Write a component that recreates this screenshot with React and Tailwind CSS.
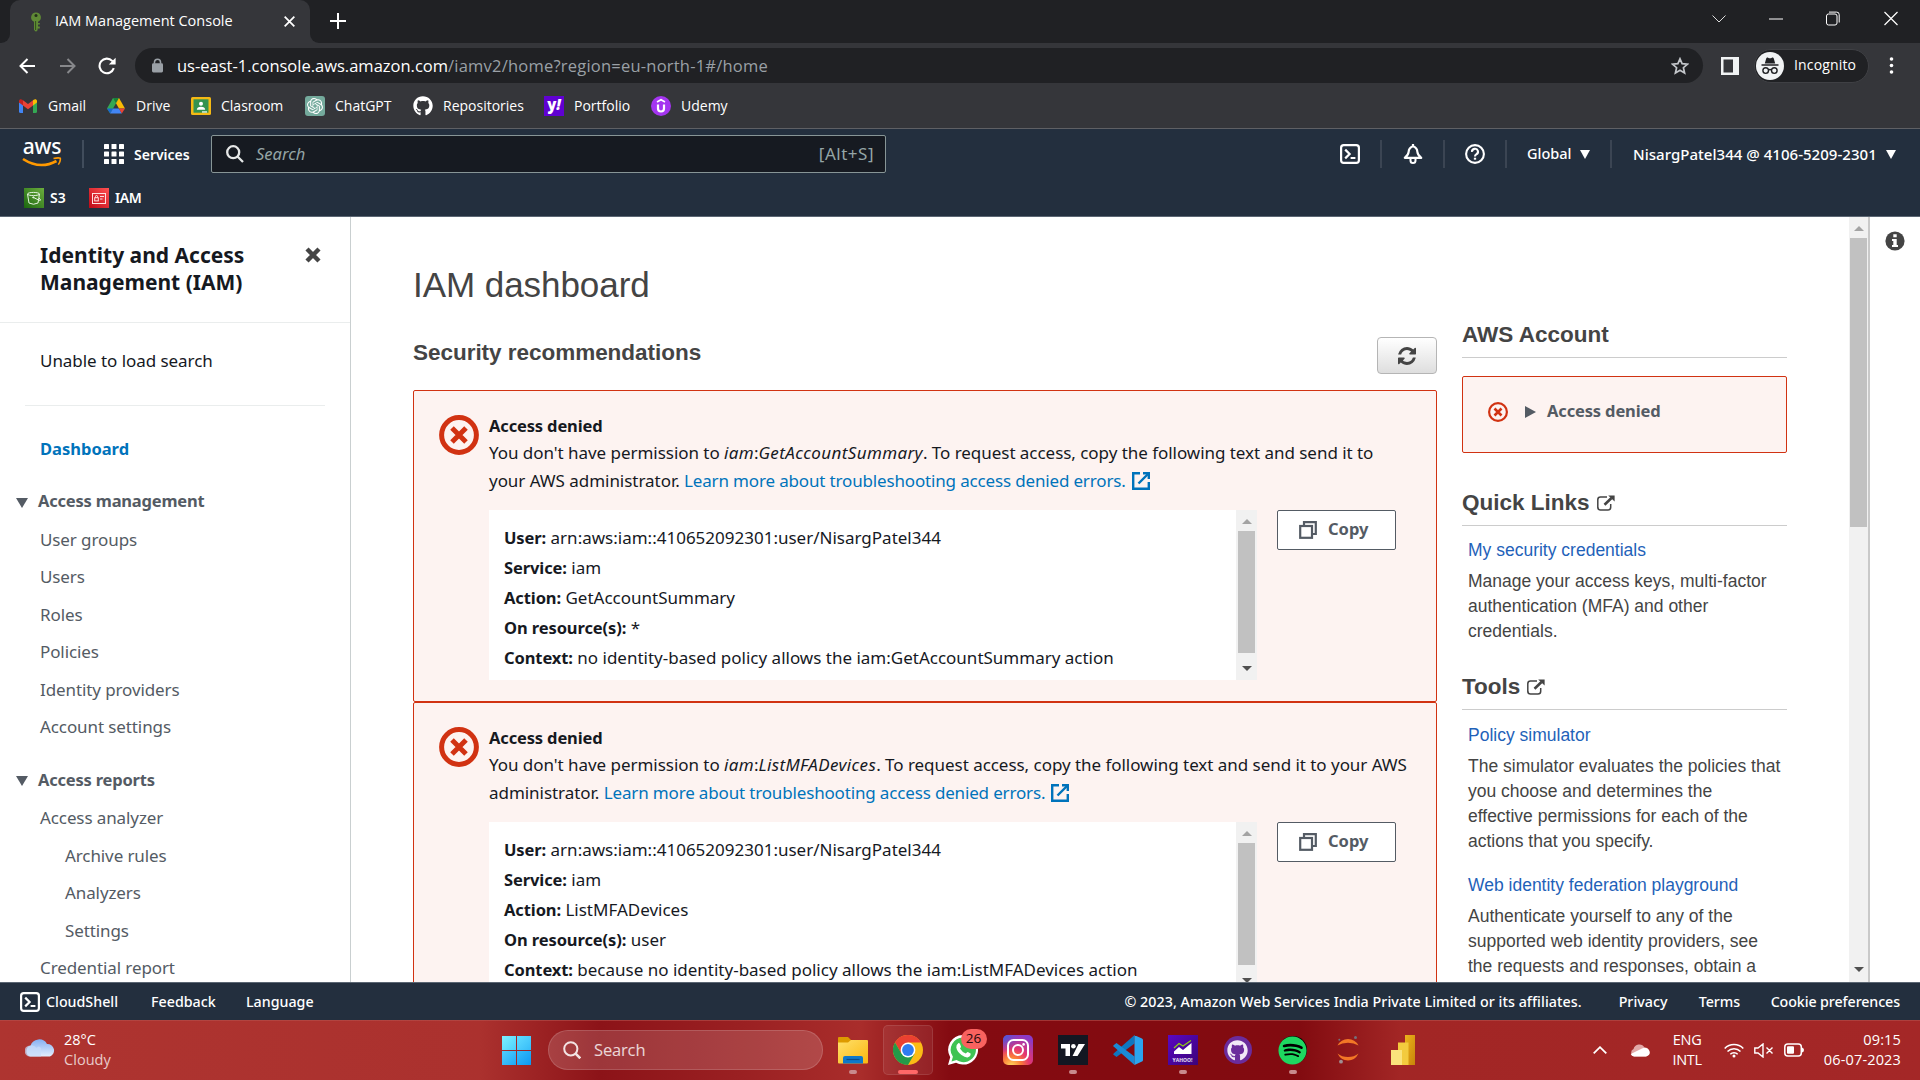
import React from "react";
import { FaGithub, FaSpotify } from "react-icons/fa";

const EMBER = "font-['Noto_Sans','Open_Sans',sans-serif]";
const SEGOE = "font-['Open_Sans','Noto_Sans',sans-serif]";
const ARIAL = "font-['Liberation_Sans',Arial,sans-serif]";

/* ---------- shared glyphs ---------- */

function Triangle({ dir = "down", className = "" }) {
  const d = { down: "M0 0H10L5 9Z", up: "M0 9H10L5 0Z", right: "M0 0L10 5L0 10Z" }[dir];
  return (
    <svg viewBox={dir === "right" ? "0 0 10 10" : "0 0 10 9"} preserveAspectRatio="none" className={className} fill="currentColor">
      <path d={d} />
    </svg>
  );
}

function CloudShellIcon({ className }) {
  return (
    <svg viewBox="0 0 20 20" className={className} fill="none" stroke="currentColor">
      <rect x="1.1" y="1.1" width="17.8" height="17.8" rx="2.6" strokeWidth="2.2" />
      <path d="M5.2 5.6L9.6 10L5.2 14.4" strokeWidth="2.2" />
      <path d="M10.6 14H15.4" strokeWidth="2" />
    </svg>
  );
}

function ErrorIcon({ className }) {
  return (
    <svg viewBox="0 0 40 40" className={className} fill="none" stroke="#d13212" strokeWidth="5">
      <circle cx="20" cy="20" r="17.4" />
      <path d="M13 13L27 27M27 13L13 27" />
    </svg>
  );
}

function ExternalBlue() {
  return (
    <svg viewBox="0 0 18 18" className="ml-1.5 inline-block h-[18px] w-[18px] align-[-3px]" fill="none" stroke="#0073bb" strokeWidth="2.4">
      <path d="M8 1.2H1.2V16.8H16.8V10" />
      <path d="M11 1.2H16.8V7" />
      <path d="M16.5 1.5L6.5 11.5" />
    </svg>
  );
}

function ExternalGray() {
  return (
    <svg viewBox="0 0 18 16" className="ml-[7px] h-4 w-[18px]" fill="none" stroke="#444">
      <path d="M10 2H3.500A2.700 2.700 0 0 0 .8 4.600V12.400A2.700 2.700 0 0 0 3.500 15H11A2.700 2.700 0 0 0 13.700 12.400V9" strokeWidth="1.500" />
      <path d="M7.500 9.800L14.500 3" strokeWidth="2.600" />
      <path d="M11.200 .4H17.600V6.600Z" fill="#444" stroke="none" />
    </svg>
  );
}

/* ---------- browser chrome ---------- */

function TabStrip() {
  return (
    <div className="flex h-[43px] bg-[#202124] text-white">
      <div className="h-full w-[10px] bg-[#35363a]">
        <div className="h-full w-full rounded-br-[9px] bg-[#202124]" />
      </div>
      <div className="flex h-full w-[300px] items-center rounded-t-[10px] bg-[#35363a]">
        <svg viewBox="0 0 12 20" className="ml-5 h-5 w-3">
          <path d="M6 .5a4.800 4.800 0 0 0-2 9.200V18l2 1.800 1.600-1.500V16.500H9.800V14.500H8V12.500H9.800V11H8V9.700A4.800 4.800 0 0 0 6 .5Z" fill="#5f8a35" />
          <circle cx="6" cy="3.600" r="1.500" fill="#24301a" />
          <path d="M5.600 9V18" stroke="#2f4d1c" strokeWidth="1" />
        </svg>
        <span className="ml-[13px] -mt-[2px] w-[210px] whitespace-nowrap text-[14.5px]">IAM Management Console</span>
        <svg viewBox="0 0 10 10" className="ml-[19px] h-[11px] w-[11px]" stroke="#fff" strokeWidth="1.600">
          <path d="M.6 .6L9.400 9.400M9.400 .6L.6 9.400" />
        </svg>
      </div>
      <div className="h-full w-[10px] bg-[#35363a]">
        <div className="h-full w-full rounded-bl-[9px] bg-[#202124]" />
      </div>
      <svg viewBox="0 0 16 16" className="ml-[10px] mt-[13px] h-4 w-4" stroke="#fff" strokeWidth="2">
        <path d="M8 0V16M0 8H16" />
      </svg>
      <div className="ml-auto flex pt-[11px]">
        <svg viewBox="0 0 14 14" className="h-[15px] w-[14px]" stroke="#ddd" fill="none"><path d="M.5 4L7 10.500L13.500 4" /></svg>
        <svg viewBox="0 0 14 14" className="ml-[43px] h-[15px] w-[14px]" stroke="#fff" fill="none"><path d="M0 7.500H14" /></svg>
        <svg viewBox="0 0 14 14" className="ml-[43px] h-[15px] w-[14px]" stroke="#fff" fill="none">
          <rect x=".5" y="2.500" width="10.500" height="11" rx="2" />
          <path d="M3 .6H10.500A2.500 2.500 0 0 1 13.200 3V11" />
        </svg>
        <svg viewBox="0 0 14 14" className="ml-[44px] mr-[22px] h-[15px] w-[14px]" stroke="#fff" fill="none"><path d="M.5 .5L13.500 13.500M13.500 .5L.5 13.500" strokeWidth="1.200" /></svg>
      </div>
    </div>
  );
}

function Toolbar() {
  return (
    <div className="flex h-[45px] items-center bg-[#35363a] text-white">
      <svg viewBox="0 0 16 16" className="ml-[19px] h-4 w-4" fill="none" stroke="#fff" strokeWidth="2"><path d="M16 8H1.500M8.500 1L1.500 8L8.500 15" /></svg>
      <svg viewBox="0 0 16 16" className="ml-[25px] h-4 w-4" fill="none" stroke="#87888b" strokeWidth="2"><path d="M0 8H14.500M7.500 1L14.500 8L7.500 15" /></svg>
      <svg viewBox="0 0 18 18" className="ml-[22px] h-[18px] w-[18px]" fill="none" stroke="#fff" strokeWidth="2.100">
        <path d="M15.800 11.200A7.300 7.300 0 1 1 14.200 3.900L16 5.800" />
        <path d="M17.600 .8V7.600H10.800Z" fill="#fff" stroke="none" />
      </svg>
      <div className="ml-[19px] flex h-[35px] w-[1568px] items-center rounded-full bg-[#202124]">
        <svg viewBox="0 0 12 15" className="ml-[17px] h-[15px] w-[11px]" fill="#9aa0a6">
          <rect x="0" y="5" width="12" height="10" rx="1.500" />
          <path d="M2.700 5.500V4A3.300 3.300 0 0 1 9.300 4V5.500" fill="none" stroke="#9aa0a6" strokeWidth="1.700" />
        </svg>
        <span className="ml-[14px] mt-px whitespace-nowrap text-[16.5px]">us-east-1.console.aws.amazon.com<span className="tracking-[0.22px] text-[#9aa0a6]">/iamv2/home?region=eu-north-1#/home</span></span>
        <svg viewBox="0 0 18 18" className="ml-auto mr-[14px] h-[18px] w-[18px]" fill="none" stroke="#c4c7cb" strokeWidth="1.700">
          <path d="M9 1.800L11.100 6.700L16.500 7.200L12.400 10.700L13.600 16L9 13.200L4.400 16L5.600 10.700L1.500 7.200L6.900 6.700Z" />
        </svg>
      </div>
      <svg viewBox="0 0 18 18" className="ml-[18px] h-[18px] w-[18px]"><path fillRule="evenodd" fill="#f1f3f4" d="M0 0H18V18H0ZM2.500 2.500V15.500H12V2.500Z" /></svg>
      <div className="ml-[15px] flex h-[34px] w-[115px] items-center rounded-full border border-[#3f4044] bg-[#202124]">
        <svg viewBox="0 0 28 28" className="ml-[1px] h-7 w-7">
          <circle cx="14" cy="14" r="14" fill="#f1f3f4" />
          <path d="M10.200 6.500C10.600 5.400 11.500 5.500 12.500 5.900C13.500 6.200 14.500 6.200 15.500 5.900C16.500 5.500 17.400 5.400 17.800 6.500L19.200 11.400H8.800Z" fill="#202124" />
          <path d="M5.500 13H22.500" stroke="#202124" strokeWidth="1.500" />
          <g fill="none" stroke="#202124" strokeWidth="1.400"><circle cx="9.700" cy="18.600" r="2.800" /><circle cx="18.300" cy="18.600" r="2.800" /><path d="M12.500 18Q14 17 15.500 18" /></g>
        </svg>
        <span className="ml-[10px] -mt-[2px] text-[14px] tracking-[0.15px]">Incognito</span>
      </div>
      <svg viewBox="0 0 4 17" className="ml-[20px] h-[17px] w-[5px]" fill="#fff"><circle cx="2" cy="2" r="1.800" /><circle cx="2" cy="8.500" r="1.800" /><circle cx="2" cy="15" r="1.800" /></svg>
    </div>
  );
}

function GmailIcon() {
  return (
    <svg viewBox="0 0 20 20" className="ml-px h-5 w-5">
      <path d="M1 6V15.500Q1 17 2.500 17H5V8.500Z" fill="#4285f4" />
      <path d="M19 6V15.500Q19 17 17.500 17H15V8.500Z" fill="#34a853" />
      <path d="M15 4.300L15 9.500L19 6.500V5C19 3.200 17 2.700 15.700 3.700Z" fill="#fbbc04" />
      <path d="M5 4.300V9.500L1 6.500V5C1 3.200 3 2.700 4.300 3.700Z" fill="#c5221f" />
      <path d="M5 4.200L10 8L15 4.200V9.500L10 13.300L5 9.500Z" fill="#ea4335" />
    </svg>
  );
}

function DriveIcon() {
  return (
    <svg viewBox="0 0 20 20" className="h-5 w-5">
      <path d="M7 2H13L10 7.200L4.200 17.500L1 12.500Z" fill="#34a853" />
      <path d="M7 2H13L10 7.200Z" fill="#188038" />
      <path d="M13 2L19 12.500H13L10 7.200Z" fill="#fbbc04" />
      <path d="M1 12.500H7L4.200 17.500Z" fill="#1967d2" />
      <path d="M7 12.500H13L15.800 17.500H4.200Z" fill="#4285f4" />
      <path d="M13 12.500H19L15.800 17.500Z" fill="#ea4335" />
    </svg>
  );
}

function ClassroomIcon() {
  return (
    <svg viewBox="0 0 20 20" className="h-5 w-5">
      <rect width="20" height="18" y="1" rx="1.500" fill="#f5ba14" />
      <rect x="2.500" y="3.300" width="15" height="13.400" fill="#34934f" />
      <circle cx="10" cy="7.800" r="2" fill="#fff" />
      <path d="M5.800 13.800Q6 10.800 10 10.800T14.200 13.800Z" fill="#fff" />
      <rect x="11" y="15.200" width="5" height="1.500" fill="#d7efe0" />
    </svg>
  );
}

function OpenAIIcon() {
  return (
    <div className="flex h-5 w-5 items-center justify-center rounded-[3px] bg-[#74aa9c]">
      <svg viewBox="0 0 24 24" className="h-4 w-4" fill="#fff">
        <path d="M22.2819 9.8211a5.9847 5.9847 0 0 0-.5157-4.9108 6.0462 6.0462 0 0 0-6.5098-2.9A6.0651 6.0651 0 0 0 4.9807 4.1818a5.9847 5.9847 0 0 0-3.9977 2.9 6.0462 6.0462 0 0 0 .7427 7.0966 5.98 5.98 0 0 0 .511 4.9107 6.051 6.051 0 0 0 6.5146 2.9001A5.9847 5.9847 0 0 0 13.2599 24a6.0557 6.0557 0 0 0 5.7718-4.2058 5.9894 5.9894 0 0 0 3.9977-2.9001 6.0557 6.0557 0 0 0-.7475-7.0729zm-9.022 12.6081a4.4755 4.4755 0 0 1-2.8764-1.0408l.1419-.0804 4.7783-2.7582a.7948.7948 0 0 0 .3927-.6813v-6.7369l2.02 1.1686a.071.071 0 0 1 .038.052v5.5826a4.504 4.504 0 0 1-4.4945 4.4944zm-9.6607-4.1254a4.4708 4.4708 0 0 1-.5346-3.0137l.142.0852 4.783 2.7582a.7712.7712 0 0 0 .7806 0l5.8428-3.3685v2.3324a.0804.0804 0 0 1-.0332.0615L9.74 19.9502a4.4992 4.4992 0 0 1-6.1408-1.6464zM2.3408 7.8956a4.485 4.485 0 0 1 2.3655-1.9728V11.6a.7664.7664 0 0 0 .3879.6765l5.8144 3.3543-2.0201 1.1685a.0757.0757 0 0 1-.071 0l-4.8303-2.7865A4.504 4.504 0 0 1 2.3408 7.872zm16.5963 3.8558L13.1038 8.364 15.1192 7.2a.0757.0757 0 0 1 .071 0l4.8303 2.7913a4.4944 4.4944 0 0 1-.6765 8.1042v-5.6772a.79.79 0 0 0-.407-.667zm2.0107-3.0231l-.142-.0852-4.7735-2.7818a.7759.7759 0 0 0-.7854 0L9.409 9.2297V6.8974a.0662.0662 0 0 1 .0284-.0615l4.8303-2.7866a4.4992 4.4992 0 0 1 6.6802 4.66zM8.3065 12.863l-2.02-1.1638a.0804.0804 0 0 1-.038-.0567V6.0742a4.4992 4.4992 0 0 1 7.3757-3.4537l-.142.0805L8.704 5.459a.7948.7948 0 0 0-.3927.6813zm1.0976-2.3654l2.602-1.4998 2.6069 1.4998v2.9994l-2.5974 1.4997-2.6067-1.4997Z" />
      </svg>
    </div>
  );
}

function YahooIcon() {
  return (
    <div className="flex h-5 w-5 items-center justify-center bg-[#6001d2] text-[15px] font-extrabold leading-none text-white">
      <span className="-mt-1">y</span>
      <span className="-mt-1 italic">!</span>
    </div>
  );
}

function UdemyIcon() {
  return (
    <svg viewBox="0 0 20 20" className="h-5 w-5">
      <circle cx="10" cy="10" r="10" fill="#a435f0" />
      <path d="M6 6L10 3.700L14 6" fill="none" stroke="#fff" strokeWidth="1.600" />
      <path d="M7 8.500V12.500A3 3 0 0 0 13 12.500V8.500" fill="none" stroke="#fff" strokeWidth="2.200" />
    </svg>
  );
}

const bookmarks = [
  { label: "Gmail", width: "w-[89px]", icon: <GmailIcon /> },
  { label: "Drive", width: "w-[85px]", icon: <DriveIcon /> },
  { label: "Clasroom", width: "w-[114px]", icon: <ClassroomIcon /> },
  { label: "ChatGPT", width: "w-[108px]", icon: <OpenAIIcon /> },
  { label: "Repositories", width: "w-[131px]", icon: <FaGithub className="h-5 w-5" /> },
  { label: "Portfolio", width: "w-[107px]", icon: <YahooIcon /> },
  { label: "Udemy", width: "w-[100px]", icon: <UdemyIcon /> },
];

function Bookmarks() {
  return (
    <div className="flex h-[41px] border-b border-[#5f6064] bg-[#35363a] pb-1 pl-[17px] text-white">
      {bookmarks.map((b) => (
        <div key={b.label} className={"flex items-center gap-[10px] whitespace-nowrap text-[14px] " + b.width}>
          {b.icon}
          <span className="-mt-[2px]">{b.label}</span>
        </div>
      ))}
    </div>
  );
}

/* ---------- AWS header ---------- */

function AwsHeader() {
  return (
    <header className="h-[88px] border-b border-[#5b6673] bg-[#232f3e] text-white">
      <div className="flex h-[50px] items-center">
        <div className="ml-[21px] flex w-[42px] flex-col items-center">
          <span className="-mt-1 text-[21px] font-medium leading-[17px] tracking-[-0.3px]">aws</span>
          <svg viewBox="0 0 40 10" className="mt-0.5 h-[10px] w-10" fill="none" stroke="#ff9900">
            <path d="M1 2Q18 13 34.500 4" strokeWidth="2.600" />
            <path d="M31.500 1.600Q36.500 .3 38.300 1.300Q38.800 4 36.300 7.600" strokeWidth="1.600" />
          </svg>
        </div>
        <div className="ml-[19px] h-7 w-[2px] bg-[#414d5c]" />
        <svg viewBox="0 0 20 20" className="ml-[20px] h-5 w-5" fill="#fff">
          {[0, 7.5, 15].map((x) => [0, 7.5, 15].map((y) => <rect key={x + "-" + y} x={x} y={y} width="5" height="5" rx=".6" />))}
        </svg>
        <span className="ml-[10px] w-[77px] text-[14px] font-semibold">Services</span>
        <div className="flex h-[38px] w-[675px] items-center rounded-[2px] border border-[#879596] bg-[#161a21] text-[16.5px] text-[#95a5a6]">
          <svg viewBox="0 0 18 18" className="ml-[14px] h-[18px] w-[18px]" fill="none" stroke="#e6e8e8" strokeWidth="2.300"><circle cx="7.200" cy="7.200" r="6" /><path d="M11.500 11.500L17 17" /></svg>
          <span className="ml-[12px] italic">Search</span>
          <span className="ml-auto mr-[11px] text-[17px] tracking-[0.5px]">[Alt+S]</span>
        </div>
        <div className="ml-auto flex h-7 items-center text-[14.5px] font-medium">
          <div className="flex w-[60px] justify-center"><CloudShellIcon className="h-5 w-5" /></div>
          <div className="flex h-7 w-[65px] items-center justify-center border-x-2 border-[#3b4553]">
            <svg viewBox="0 0 20 20" className="h-5 w-5" fill="none" stroke="#fff" strokeWidth="2.200">
              <path d="M10 2.200C7.200 3 5.800 5 5.600 8C5.500 10.500 4 12 1.800 13.900H18.200C16 12 14.500 10.500 14.400 8C14.200 5 12.800 3 10 2.200Z" strokeLinejoin="round" />
              <path d="M10 0V3" />
              <path d="M7.500 15V16.500A2.500 2.500 0 0 0 12.500 16.500V15" strokeWidth="2" />
            </svg>
          </div>
          <div className="flex w-[60px] justify-center">
            <svg viewBox="0 0 20 20" className="h-5 w-5" fill="none" stroke="#fff" strokeWidth="2.100">
              <circle cx="10" cy="10" r="8.900" />
              <path d="M7 7.900A3 2.900 0 1 1 11.300 10.300Q10 11 10 12.400" />
              <path d="M10 13.700V15.700" strokeWidth="2.300" />
            </svg>
          </div>
          <div className="flex h-7 w-[107px] items-center border-x-2 border-[#3b4553] pl-[20px]">
            <span>Global</span>
            <Triangle className="ml-2 h-[9px] w-[10px]" />
          </div>
          <div className="flex w-[308px] items-center pl-[21px]">
            <span className="w-[253px] whitespace-nowrap text-[15px] tracking-[0.03px]">NisargPatel344 @ 4106-5209-2301</span>
            <Triangle className="h-[9px] w-[10px]" />
          </div>
        </div>
      </div>
      <div className="flex h-[37px] items-center pl-6 text-[14px] font-semibold">
        <svg viewBox="0 0 20 20" className="h-5 w-5">
          <defs><linearGradient id="s3" x1="0" y1="1" x2="1" y2="0"><stop offset="0" stopColor="#1b660f" /><stop offset="1" stopColor="#6cae3e" /></linearGradient></defs>
          <rect width="20" height="20" fill="url(#s3)" />
          <g fill="none" stroke="#e4f2df" strokeWidth="1"><ellipse cx="9.500" cy="6" rx="6" ry="1.600" /><path d="M3.500 6L5 15Q9.500 17.500 14 15L15.500 6" /><path d="M9.500 9.500L15 12.200Q17 12.800 16.400 11.500L15 10" /><circle cx="9.300" cy="9.400" r=".6" fill="#fff" /></g>
        </svg>
        <span className="ml-[6px] w-[39px]">S3</span>
        <svg viewBox="0 0 20 20" className="h-5 w-5">
          <defs><linearGradient id="iam" x1="0" y1="1" x2="1" y2="0"><stop offset="0" stopColor="#bd0816" /><stop offset="1" stopColor="#ff5252" /></linearGradient></defs>
          <rect width="20" height="20" fill="url(#iam)" />
          <g fill="none" stroke="#ffe1e1" strokeWidth="1"><rect x="3.500" y="5.500" width="13" height="10" /><rect x="5.700" y="9.700" width="3.600" height="3.200" /><path d="M6.500 9.500V8.500A1 1 0 0 1 8.500 8.500V9.500M11 8.500H15M11 11H13.500" /></g>
        </svg>
        <span className="ml-[6px] tracking-[-0.4px]">IAM</span>
      </div>
    </header>
  );
}

/* ---------- side navigation ---------- */

function NavItem({ children, indent }) {
  return <a className={"flex h-[37.5px] items-center whitespace-nowrap tracking-[-0.1px] " + (indent ? "pl-[65px]" : "pl-[40px]")}>{children}</a>;
}

function NavGroup({ children }) {
  return (
    <div className="flex h-[37.5px] items-center pl-4 text-[16.5px] font-bold tracking-[-0.2px]">
      <Triangle className="mr-[10px] mt-0.5 h-[10px] w-[12px]" />
      {children}
    </div>
  );
}

function SideNav() {
  return (
    <nav className="h-full w-[351px] shrink-0 overflow-hidden border-r border-[#c9cfd0] bg-white text-[17px] text-[#545b64]">
      <div className="flex h-[106px] justify-between border-b border-[#eaeded] pl-10 pr-[29px] pt-[25px] text-[21px] font-bold leading-[27px] text-[#16191f]">
        <span>Identity and Access<br />Management (IAM)</span>
        <svg viewBox="0 0 16 16" className="mt-[5px] h-4 w-4" stroke="#444" strokeWidth="4.400"><path d="M2 2L14 14M14 2L2 14" /></svg>
      </div>
      <div className="mx-[25px] flex h-[83px] items-center border-b border-[#eaeded] pb-[6px] pl-[15px] text-[#16191f]"><span className="tracking-[-0.05px]">Unable to load search</span></div>
      <div className="mt-[25px] flex h-[37.500px] items-center pl-[40px] text-[16.5px] font-bold text-[#0073bb]">Dashboard</div>
      <div className="h-[14.500px]" />
      <NavGroup>Access management</NavGroup>
      {["User groups", "Users", "Roles", "Policies", "Identity providers", "Account settings"].map((t) => <NavItem key={t}>{t}</NavItem>)}
      <div className="h-[16px]" />
      <NavGroup>Access reports</NavGroup>
      <NavItem>Access analyzer</NavItem>
      {["Archive rules", "Analyzers", "Settings"].map((t) => <NavItem key={t} indent>{t}</NavItem>)}
      <NavItem>Credential report</NavItem>
    </nav>
  );
}

/* ---------- main content ---------- */

function PermissionAlert({ name, tail, lead, rows }) {
  return (
    <section className={"flex h-[312px] shrink-0 rounded-[2px] border border-[#d13212] bg-[#fdf3f1] pl-[25px] text-[17px] text-[#16191f] " + EMBER}>
      <ErrorIcon className="mt-[24px] h-10 w-10 shrink-0" />
      <div className="ml-[10px] pt-[22px]">
        <h3 className="h-[26px] text-[16.5px] font-bold leading-[26px] tracking-[-0.15px]">Access denied</h3>
        <p className="h-[55px] whitespace-nowrap leading-[27.5px] tracking-[-0.04px]">
          You don't have permission to <i className="tracking-[0.3px]">iam</i>:<i className="tracking-[0.38px]">{name}</i>. To request access, copy the following text and send it to {tail}
          <br />
          {lead} <a className="tracking-[-0.16px] text-[#0073bb]">Learn more about troubleshooting access denied errors.<ExternalBlue /></a>
        </p>
        <div className="mt-[16px] flex">
          <div className="flex h-[170px] w-[768px] bg-white">
            <div className="flex-1 overflow-hidden whitespace-nowrap pl-[15px] pt-[13px] leading-[30px]">
              {rows.map(([k, v]) => (
                <div key={k}><b className="text-[16.5px] tracking-[-0.1px]">{k}:</b> {v}</div>
              ))}
            </div>
            <div className="flex w-[21px] flex-col items-center bg-[#f1f1f1]">
              <Triangle dir="up" className="mt-[9px] h-[5px] w-[10px] text-[#a3a3a3]" />
              <div className="mt-[7px] h-[122px] w-[17px] bg-[#c1c1c1]" />
              <Triangle className="mt-[13px] h-[5px] w-[10px] text-[#505050]" />
            </div>
          </div>
          <button className="ml-5 flex h-10 w-[119px] items-center rounded-[2px] border border-[#545b64] bg-white pl-[21px] text-[16.5px] font-bold text-[#545b64]">
            <svg viewBox="0 0 18 18" className="h-[18px] w-[18px]" fill="none" stroke="#545b64" strokeWidth="2.200"><rect x="1.200" y="5" width="11.800" height="11.800" /><path d="M5 5V1.200H16.800V13H13" /></svg>
            <span className="ml-[11px] -mt-0.5">Copy</span>
          </button>
        </div>
      </div>
    </section>
  );
}

function AsideHeading({ children, icon }) {
  return (
    <h2 className="flex h-[38px] items-start whitespace-nowrap border-b border-[#ccc] pt-px text-[22.5px] font-bold leading-7">
      {children}
      {icon && <span className="flex h-7 items-center"><ExternalGray /></span>}
    </h2>
  );
}

function Aside() {
  return (
    <aside className={"ml-[25px] w-[325px] shrink-0 pt-[103px] text-[17.5px] leading-[25px] text-[#444] " + ARIAL}>
      <AsideHeading>AWS Account</AsideHeading>
      <div className={"mt-[18px] flex h-[77px] rounded-[2px] border border-[#d13212] bg-[#fdf3f1] pl-[25px] pt-[21px] text-[16.5px] font-bold tracking-[-0.15px] text-[#545b64] " + EMBER}>
        <svg viewBox="0 0 20 20" className="mt-[4px] h-5 w-5" fill="none" stroke="#d13212" strokeWidth="2.200"><circle cx="10" cy="10" r="8.900" /><path d="M6.500 6.500L13.500 13.500M13.500 6.500L6.500 13.500" strokeWidth="2.600" /></svg>
        <Triangle dir="right" className="ml-[17px] mt-[8px] h-3 w-[11px]" />
        <span className="ml-[11px]">Access denied</span>
      </div>
      <div className="h-[35px]" />
      <AsideHeading icon>Quick Links</AsideHeading>
      <div className="whitespace-nowrap pl-[6px]">
        <a className="mt-3 block text-[#1f62b9]">My security credentials</a>
        <p className="mt-1.5">Manage your access keys, multi-factor<br />authentication (MFA) and other<br />credentials.</p>
      </div>
      <div className="h-[28px]" />
      <AsideHeading icon>Tools</AsideHeading>
      <div className="whitespace-nowrap pl-[6px]">
        <a className="mt-[13px] block text-[#1f62b9]">Policy simulator</a>
        <p className="mt-1.5">The simulator evaluates the policies that<br />you choose and determines the<br />effective permissions for each of the<br />actions that you specify.</p>
        <a className="mt-[19px] block text-[#1f62b9]">Web identity federation playground</a>
        <p className="mt-1.5">Authenticate yourself to any of the<br />supported web identity providers, see<br />the requests and responses, obtain a</p>
      </div>
    </aside>
  );
}

function Dashboard() {
  return (
    <main className="flex flex-1 overflow-hidden bg-white">
      <div className="ml-[62px] w-[1024px] shrink-0">
        <div className={"flex h-[173px] items-start justify-between text-[#444] " + ARIAL}>
          <div>
            <h1 className="mt-12 text-[35px] leading-10 tracking-[-0.05px]">IAM dashboard</h1>
            <h2 className="mt-[34px] text-[22.5px] font-bold leading-7 tracking-[-0.03px]">Security recommendations</h2>
          </div>
          <button className="mt-[120px] flex h-[37px] w-[60px] items-center justify-center rounded-[4px] border border-[#b5b5b5] bg-linear-to-b from-white to-[#dedede]">
            <svg viewBox="0 0 1536 1536" className="h-[18px] w-[18px]" fill="#444">
              <path d="M1511 928q0 5-1 7-64 268-268 434.500T764 1536q-146 0-282.500-55T238 1324l-129 129q-19 19-45 19t-45-19-19-45V960q0-26 19-45t45-19h448q26 0 45 19t19 45-19 45l-137 137q71 66 161 102t187 36q134 0 250-65t186-179q11-17 53-117 8-23 30-23h192q13 0 22.500 9.500t9.500 22.500zm25-800v448q0 26-19 45t-45 19h-448q-26 0-45-19t-19-45 19-45l138-138Q969 256 768 256q-134 0-250 65T332 500q-11 17-53 117-8 23-30 23H50q-13 0-22.500-9.500T18 608v-7q65-268 270-434.500T768 0q146 0 284 55.500T1297 212l130-129q19-19 45-19t45 19 19 45z" />
            </svg>
          </button>
        </div>
        <PermissionAlert
          name="GetAccountSummary"
          tail=""
          lead="your AWS administrator."
          rows={[["User", "arn:aws:iam::410652092301:user/NisargPatel344"], ["Service", "iam"], ["Action", "GetAccountSummary"], ["On resource(s)", "*"], ["Context", "no identity-based policy allows the iam:GetAccountSummary action"]]}
        />
        <PermissionAlert
          name="ListMFADevices"
          tail="your AWS"
          lead="administrator."
          rows={[["User", "arn:aws:iam::410652092301:user/NisargPatel344"], ["Service", "iam"], ["Action", "ListMFADevices"], ["On resource(s)", "user"], ["Context", "because no identity-based policy allows the iam:ListMFADevices action"]]}
        />
      </div>
      <Aside />
      <div className="ml-auto flex h-full w-[21px] flex-col items-center border-r-2 border-[#c9c9c9] bg-[#f1f1f1]">
        <Triangle dir="up" className="mt-[9px] h-[5px] w-[10px] text-[#a3a3a3]" />
        <div className="mt-[7px] h-[289px] w-[17px] bg-[#c1c1c1]" />
        <Triangle className="mb-[10px] mt-auto h-[5px] w-[10px] text-[#505050]" />
      </div>
      <div className="flex w-[50px] justify-center bg-white pt-[14px]">
        <svg viewBox="0 0 20 20" className="h-5 w-5">
          <circle cx="10" cy="10" r="9.600" fill="#444" />
          <path d="M8.300 3.200H11.700V6.200H8.300ZM7 8H11.700V14H13V16H7V14H8.300V10H7Z" fill="#fff" />
        </svg>
      </div>
    </main>
  );
}

function Footer() {
  return (
    <footer className="flex h-[38px] items-center border-t border-[#5b6673] bg-[#232f3e] pt-px text-[14.25px] font-medium text-white">
      <CloudShellIcon className="ml-5 h-5 w-5" />
      <span className="ml-[6px] w-[105px]">CloudShell</span>
      <span className="w-[95px]">Feedback</span>
      <span>Language</span>
      <span className="ml-auto mr-[37px] tracking-[0.05px]">© 2023, Amazon Web Services India Private Limited or its affiliates.</span>
      <span className="w-[80px]">Privacy</span>
      <span className="w-[72px]">Terms</span>
      <span className="mr-5 tracking-[-0.1px]">Cookie preferences</span>
    </footer>
  );
}

/* ---------- Windows taskbar ---------- */

function AppSlot({ children, running, active }) {
  return (
    <div className="flex h-full w-[55px] flex-col items-center">
      <div className={"mt-[4px] flex h-[50px] w-[50px] flex-col items-center rounded-[5px] border " + (active ? "border-white/10 bg-white/[0.07]" : "border-transparent")}>
        <div className="mt-[9px] h-[30px] w-[30px]">{children}</div>
        {active && <div className="mt-[5px] h-1 w-5 rounded-full bg-[#ff6767]" />}
        {running && <div className="mt-[5px] h-1 w-2 rounded-full bg-[#c98a8d]" />}
      </div>
    </div>
  );
}

function FolderIcon() {
  return (
    <svg viewBox="0 0 30 30" className="h-[30px] w-[30px]">
      <defs><linearGradient id="fold" x1="0" y1="0" x2="1" y2="1"><stop offset="0" stopColor="#ffe06b" /><stop offset="1" stopColor="#fbb80f" /></linearGradient></defs>
      <path d="M0 3Q0 2 1 2H10L13 5V10H0Z" fill="#dd9a00" />
      <path d="M0 7.500H10L13 5H29Q30 5 30 6V27.500Q30 28.500 29 28.500H1Q0 28.500 0 27.500Z" fill="url(#fold)" />
      <path d="M5 28.500V23Q5 21 7 21H23Q25 21 25 23V28.500Z" fill="#0f78c9" />
      <path d="M8.500 24.500H21.500" stroke="#0a4c8c" strokeWidth="1.200" />
    </svg>
  );
}

function ChromeIcon() {
  return (
    <svg viewBox="0 0 30 30" className="h-[30px] w-[30px]">
      <circle cx="15" cy="15" r="15" fill="#fbbc16" />
      <path d="M2 7.500A15 15 0 0 1 28 7.500H15L8.500 18.700Z" fill="#ea4031" />
      <path d="M2 7.500A15 15 0 0 0 15 30L21.500 18.700L15 15L8.500 18.700Z" fill="#249a49" />
      <circle cx="15" cy="15" r="7.400" fill="#fff" />
      <circle cx="15" cy="15" r="5.900" fill="#2f7cf0" />
    </svg>
  );
}

function WhatsAppIcon() {
  return (
    <div className="relative h-[30px] w-[30px]">
      <svg viewBox="0 0 30 30" className="h-[30px] w-[30px]">
        <path d="M15.200 0A14.800 14.800 0 1 1 8 27.700L0 30L2.200 22.200A14.800 14.800 0 0 1 15.200 0Z" fill="#fff" />
        <path d="M15.200 2.400A12.400 12.400 0 1 1 8.500 25L3.500 26.500L4.900 21.800A12.400 12.400 0 0 1 15.200 2.400Z" fill="#3fc353" />
        <path d="M10.500 8Q11.500 7.800 12 9L13 11.500Q13.200 12.200 12 13.500Q14 17 17.800 18.500Q19.200 16.800 19.800 17L22.600 18.500Q23 21.500 19.500 22.400Q17 22.600 13.500 20Q9 16.500 8.300 12.500Q8 9.500 10.500 8Z" fill="#fff" />
      </svg>
      <span className="absolute -top-[6px] left-[13px] flex h-5 w-[26px] items-center justify-center rounded-full bg-[#f9625f] text-[13.5px] leading-none text-[#26070a]">26</span>
    </div>
  );
}

function InstagramIcon() {
  return (
    <svg viewBox="0 0 30 30" className="h-[30px] w-[30px]">
      <defs>
        <radialGradient id="ig" cx=".28" cy="1.050" r="1.100"><stop offset="0" stopColor="#ffe060" /><stop offset=".3" stopColor="#fb7c38" /><stop offset=".55" stopColor="#e6366e" /><stop offset="1" stopColor="#8a3ac8" /></radialGradient>
        <radialGradient id="ig2" cx="0" cy="0" r=".6"><stop offset="0" stopColor="#3e5fe0" /><stop offset="1" stopColor="#6a48d0" stopOpacity="0" /></radialGradient>
      </defs>
      <rect width="30" height="30" rx="5" fill="url(#ig)" />
      <rect width="30" height="30" rx="5" fill="url(#ig2)" />
      <g fill="none" stroke="#fff" strokeWidth="2"><rect x="5" y="5" width="20" height="20" rx="5.500" /><circle cx="15" cy="15" r="5" /></g>
      <circle cx="20.600" cy="9.400" r="1.300" fill="#fff" />
    </svg>
  );
}

function TradingViewIcon() {
  return (
    <svg viewBox="0 0 30 30" className="h-[30px] w-[30px]">
      <rect width="30" height="30" fill="#131722" />
      <path d="M3 9H12V21H7.500V13.500H3ZM19.500 21H14.500L20.500 9H27Z" fill="#fff" />
      <circle cx="15.400" cy="11.300" r="2.300" fill="#fff" />
    </svg>
  );
}

function VSCodeIcon() {
  return (
    <svg viewBox="0 0 30 30" className="h-[30px] w-[30px]">
      <path d="M21.500 8.500L3.500 22L.5 19.700Q0 19 .6 18.400L21.500 0Z" fill="#0f76bf" />
      <path d="M21.500 21.500L3.500 8L.5 10.300Q0 11 .6 11.600L21.500 30Z" fill="#1a8ad6" />
      <path d="M21 0L29 3.500Q30 4 30 5V25Q30 26 29 26.500L21.500 30V0Z" fill="#2ba5ef" />
    </svg>
  );
}

function YahooFinanceIcon() {
  return (
    <div className="flex h-[30px] w-[30px] flex-col items-center bg-linear-to-br from-[#5a08c4] to-[#3b0379] pt-[5px]">
      <svg viewBox="0 0 20 14" className="h-[14px] w-5">
        <path d="M1 14V11.500L6 7L10 10L18.500 3V14Z" fill="#fff" />
        <path d="M1 8L6 3.500L10 6L18 .5" fill="none" stroke="#8fd014" strokeWidth="1.200" />
      </svg>
      <span className="mt-[3px] text-[5px] font-bold leading-[6px] text-white/90">YAHOO!</span>
    </div>
  );
}

function JupyterIcon() {
  return (
    <svg viewBox="0 0 30 30" className="h-[30px] w-[30px]">
      <path d="M4.500 10.500Q8 4 15 4T25.500 10.500Q21 7.800 15 7.800T4.500 10.500Z" fill="#f37726" />
      <path d="M4.500 18.500Q9 22 15 22T25.500 18.500Q22 25.500 15 25.500T4.500 18.500Z" fill="#f37726" />
      <circle cx="22.500" cy="2.600" r="1.500" fill="#75707a" /><circle cx="6.300" cy="4.800" r="1" fill="#75707a" /><circle cx="8" cy="26.700" r="1.900" fill="#a08f93" />
    </svg>
  );
}

function PowerBIIcon() {
  return (
    <svg viewBox="0 0 30 30" className="h-[30px] w-[30px]">
      <defs><linearGradient id="pb" x1="0" y1="0" x2="1" y2="1"><stop offset="0" stopColor="#ecb31c" /><stop offset="1" stopColor="#c88509" /></linearGradient></defs>
      <path d="M17 0H27V30H17Z" fill="url(#pb)" />
      <path d="M10 7.500H20.500V30H10Z" fill="#f3cb3e" />
      <path d="M3 15H14V30H3Z" fill="#fbe37c" />
    </svg>
  );
}

function Taskbar() {
  return (
    <div className={"flex h-[60px] border-t border-[#b5504c]/60 bg-[linear-gradient(90deg,#ae3430_0,#ab312e_480px,#8c1318_600px,#9a2022_740px,#a92d2b_860px,#840b11_950px,#820b10_1300px,#a22625_1400px,#a42727_1920px)] text-white " + SEGOE}>
      <div className="flex w-[502px] items-start pl-[25px]">
        <svg viewBox="0 0 30 20" className="mt-[16px] h-5 w-[30px]">
          <defs><linearGradient id="cl" x1="0" y1="0" x2="0" y2="1"><stop offset="0" stopColor="#86b0f2" /><stop offset="1" stopColor="#e3eefc" /></linearGradient></defs>
          <path d="M5 19.500A5 5.500 0 0 1 5.500 8.800A9 9 0 0 1 22 7A6.500 6.500 0 0 1 25 19.500Z" fill="url(#cl)" />
          <path d="M5 19.500A5.200 5.300 0 0 1 5 8.500Q9 7.500 11.500 11Q14 8 16 11V19.500Z" fill="#c7dbfa" opacity=".7" />
        </svg>
        <div className="ml-[9px] mt-[9px] text-[14.5px] leading-5">
          <div>28°C</div>
          <div className="tracking-[0.05px] text-white/75">Cloudy</div>
        </div>
      </div>
      <div className="mt-[15px] grid h-[29px] w-[29px] grid-cols-2 gap-px">
        <div className="bg-linear-to-br from-[#7df0ff] to-[#4cd0fb]" />
        <div className="bg-linear-to-br from-[#5fdcff] to-[#35bcf8]" />
        <div className="bg-linear-to-br from-[#4fcdfb] to-[#1ca9f6]" />
        <div className="bg-linear-to-br from-[#35bcf8] to-[#0a98f2]" />
      </div>
      <div className="ml-[17px] mt-[9px] flex h-10 w-[275px] items-center rounded-full border border-white/15 bg-white/15">
        <svg viewBox="0 0 18 18" className="ml-[14px] h-[18px] w-[18px]" fill="none" stroke="#f3e3e3" strokeWidth="2"><circle cx="7.800" cy="7.800" r="6.600" /><path d="M12.600 12.600L17.300 17.300" strokeWidth="2.600" /></svg>
        <span className="ml-[13px] mt-px text-[16.5px] tracking-[-0.15px] text-white/80">Search</span>
      </div>
      <div className="ml-[2px] flex">
        <AppSlot running><FolderIcon /></AppSlot>
        <AppSlot active><ChromeIcon /></AppSlot>
        <AppSlot><WhatsAppIcon /></AppSlot>
        <AppSlot><InstagramIcon /></AppSlot>
        <AppSlot running><TradingViewIcon /></AppSlot>
        <AppSlot><VSCodeIcon /></AppSlot>
        <AppSlot running><YahooFinanceIcon /></AppSlot>
        <AppSlot>
          <div className="flex h-[30px] w-[30px] items-center justify-center">
            <div className="flex h-7 w-7 items-center justify-center rounded-full bg-[#6b2c9c]"><FaGithub className="h-[21px] w-[21px] text-[#f2e9f7]" /></div>
          </div>
        </AppSlot>
        <AppSlot running>
          <div className="flex h-[30px] w-[30px] items-center justify-center">
            <div className="flex h-[28px] w-[28px] items-center justify-center rounded-full bg-black"><FaSpotify className="h-[29px] w-[29px] shrink-0 text-[#1ed760]" /></div>
          </div>
        </AppSlot>
        <AppSlot><JupyterIcon /></AppSlot>
        <AppSlot><PowerBIIcon /></AppSlot>
      </div>
      <div className="ml-auto flex items-center pb-px text-[14.5px] leading-5">
        <svg viewBox="0 0 14 8" className="h-2 w-[14px]" fill="none" stroke="#fff" strokeWidth="1.800"><path d="M.7 7.300L7 1.200L13.300 7.300" /></svg>
        <svg viewBox="0 0 20 14" className="ml-[23px] h-[14px] w-5">
          <path d="M4 13.500A4 4 0 0 1 3.500 6A6 6 0 0 1 14.500 4.500A4.600 4.600 0 0 1 16 13.500Z" fill="#e2a9a8" />
          <path d="M4 13.500Q1.500 13 .8 11L12 5.500Q16 3.500 19 7Q21.500 12 16 13.500Z" fill="#fff" />
        </svg>
        <div className="ml-[23px] text-center tracking-[-0.3px]">ENG<br />INTL</div>
        <svg viewBox="0 0 20 15" className="ml-[22px] h-[15px] w-5" fill="none" stroke="#fff" strokeWidth="1.500">
          <path d="M.7 5.500A13 13 0 0 1 19.300 5.500M3.500 8.500A9 9 0 0 1 16.500 8.500M6.300 11.300A5.200 5.200 0 0 1 13.700 11.300" />
          <circle cx="10" cy="13" r="1.500" fill="#fff" stroke="none" />
        </svg>
        <svg viewBox="0 0 20 15" className="ml-[10px] h-[15px] w-5" fill="none" stroke="#fff" strokeWidth="1.400">
          <path d="M.8 5H4L9 1V14L4 10H.8ZM12.500 4.500L18.500 10.500M18.500 4.500L12.500 10.500" />
        </svg>
        <svg viewBox="0 0 20 14" className="ml-[10px] h-[14px] w-5">
          <rect x=".8" y="1" width="16.500" height="12" rx="3" fill="none" stroke="#fff" strokeWidth="1.500" />
          <rect x="3" y="3.200" width="7" height="7.600" rx="1" fill="#fff" />
          <path d="M18 4.500Q20 5 20 7T18 9.500Z" fill="#fff" />
        </svg>
        <div className="ml-[20px] mr-[19px] text-right tracking-[0.15px]">09:15<br />06-07-2023</div>
      </div>
    </div>
  );
}

export default function App() {
  return (
    <div className="flex h-[1080px] w-[1920px] flex-col overflow-hidden bg-white">
      <div className={SEGOE}>
        <TabStrip />
        <Toolbar />
        <Bookmarks />
      </div>
      <div className={"flex min-h-0 flex-1 flex-col " + EMBER}>
        <AwsHeader />
        <div className="flex min-h-0 flex-1">
          <SideNav />
          <Dashboard />
        </div>
        <Footer />
      </div>
      <Taskbar />
    </div>
  );
}
